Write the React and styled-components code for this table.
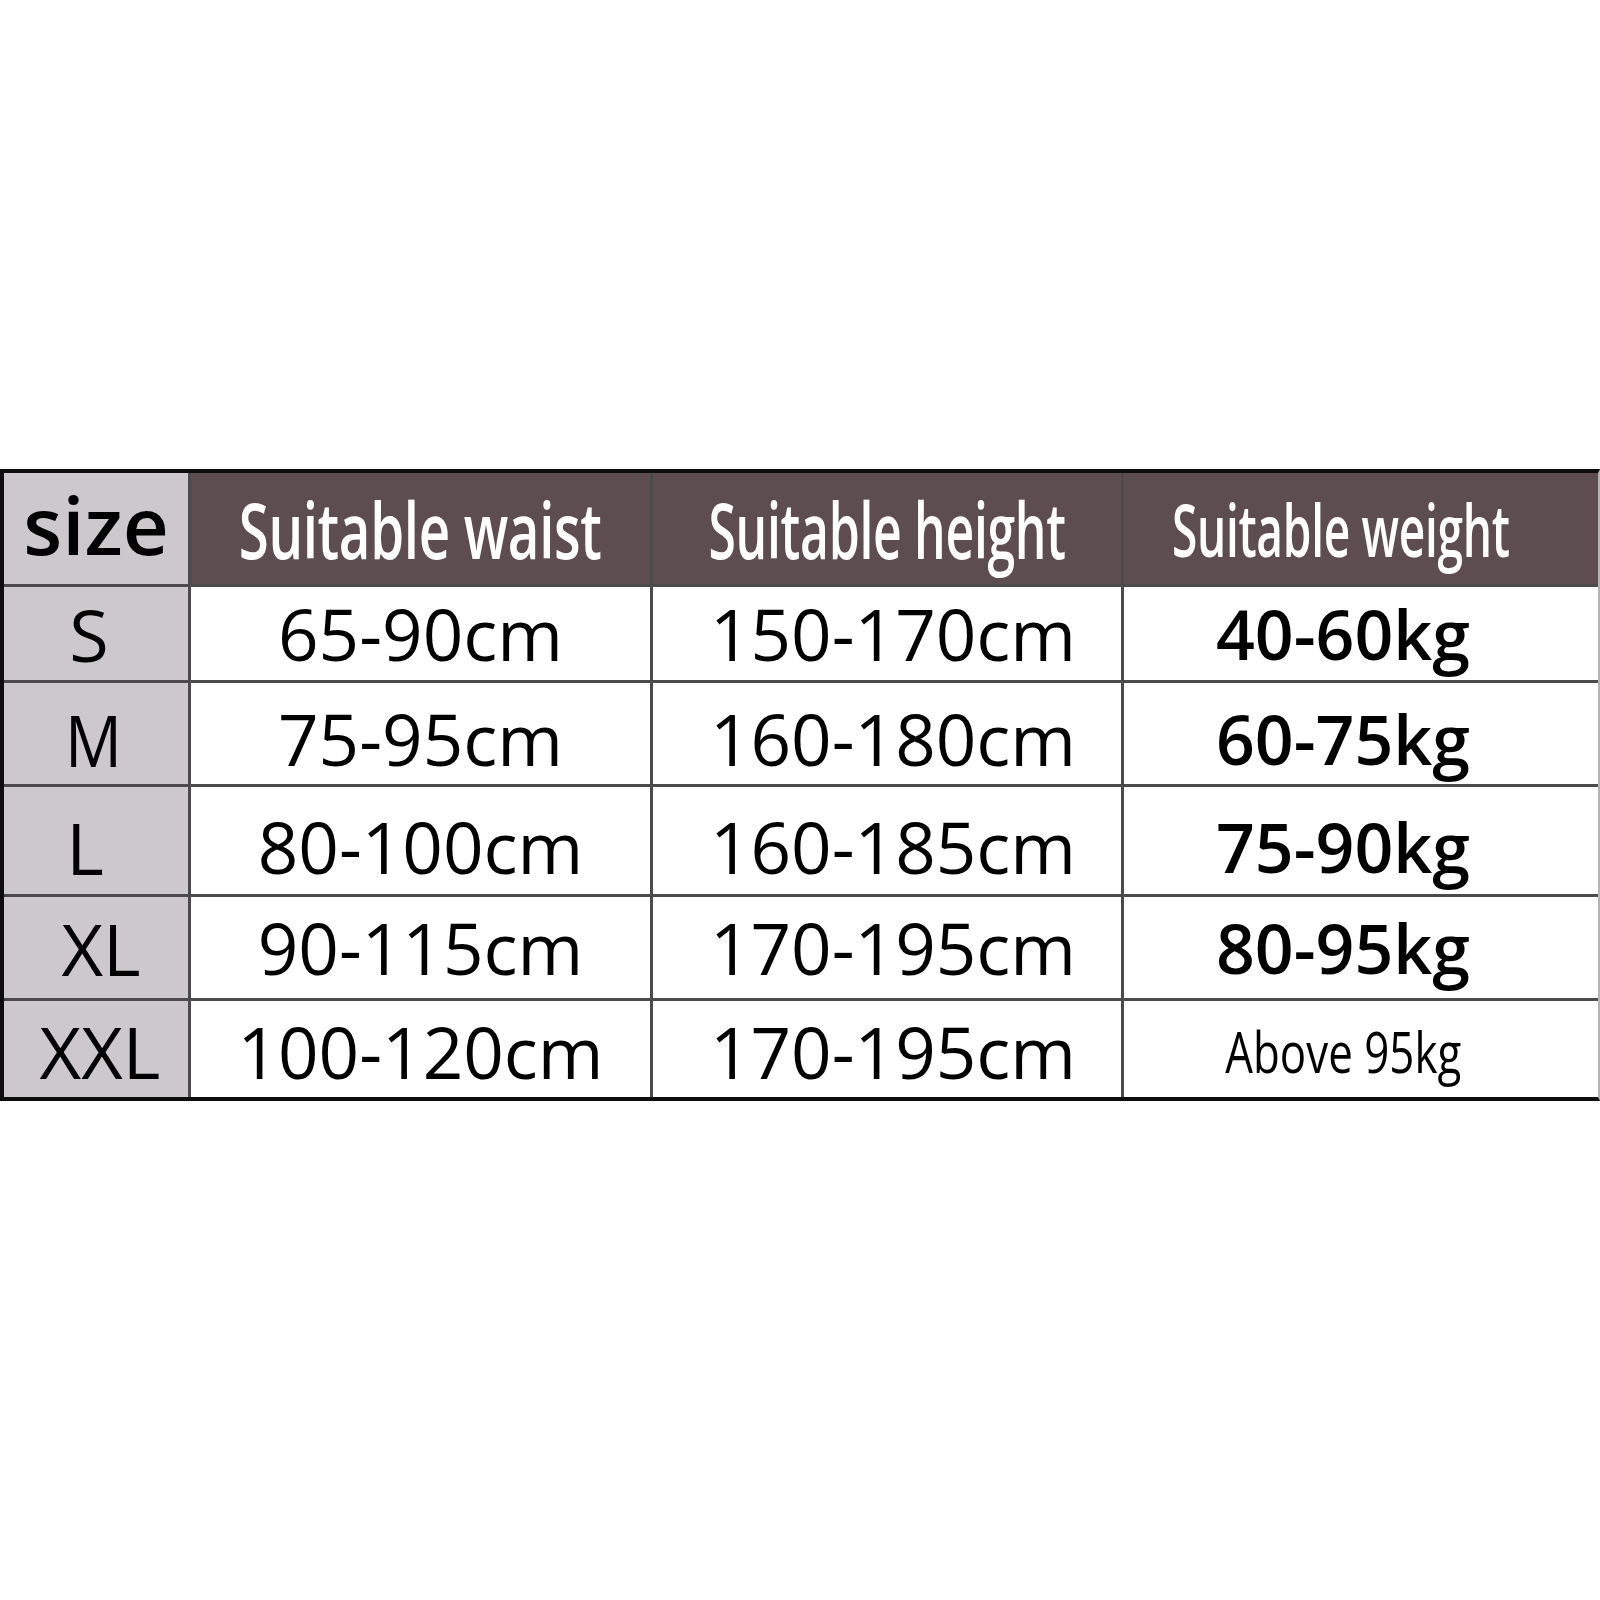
import React from "react";
import styled, { createGlobalStyle } from "styled-components";

const Global = createGlobalStyle`
  html, body { margin: 0; padding: 0; background: #ffffff; }
  body { font-family: "Open Sans", "Noto Sans", sans-serif; color: #000; }
`;

const Page = styled.div`
  width: 1600px;
  height: 1600px;
  padding-top: 469px;
  box-sizing: border-box;
  background: #fff;
`;

const Table = styled.div`
  display: grid;
  grid-template-columns: 184px 459px 468px 474px;
  grid-template-rows: 111px 93px 101px 107px 101px 96px;
  gap: 3px;
  background: #4b4b4b;
  border-top: 4px solid #0d0d0d;
  border-bottom: 4px solid #0d0d0d;
  border-left: 4px solid #0d0d0d;
  border-right: 2px solid #b5b5b5;
  width: 1600px;
  box-sizing: border-box;
`;

const Cell = styled.div`
  display: flex;
  align-items: center;
  justify-content: center;
  min-width: 0;
  background: ${(p) =>
    p.$kind === "head" ? "#5e4d50" : p.$kind === "size" ? "#ccc8cc" : "#ffffff"};
  padding-right: ${(p) => p.$padRight || 0}px;
  padding-left: ${(p) => p.$padLeft || 0}px;
  padding-top: ${(p) => p.$padTop || 0}px;
  box-sizing: border-box;
`;

const HeadText = styled.span`
  display: inline-block;
  white-space: nowrap;
  font-family: "Open Sans", sans-serif;
  font-weight: 600;
  font-size: ${(p) => p.$size}px;
  line-height: normal;
  color: #ffffff;
  transform: scaleX(${(p) => p.$scale});
  letter-spacing: -0.5px;
`;

const SizeHead = styled.span`
  font-family: "Open Sans", sans-serif;
  font-weight: 600;
  font-size: 80px;
  line-height: normal;
  color: #000;
  margin-top: -10px;
`;

const SizeText = styled.span`
  display: inline-block;
  font-family: "Open Sans", sans-serif;
  font-weight: 400;
  font-size: 72px;
  line-height: normal;
  color: #000;
  margin-left: ${(p) => p.$shift || 0}px;
  transform: scaleX(${(p) => p.$scale || 1});
`;

const DataText = styled.span`
  white-space: nowrap;
  font-family: "Open Sans", sans-serif;
  font-weight: ${(p) => (p.$bold ? 600 : 400)};
  font-size: ${(p) => (p.$bold ? 68 : 71)}px;
  line-height: normal;
  color: #000;
`;

const NarrowText = styled.span`
  display: inline-block;
  white-space: nowrap;
  font-family: "Open Sans", sans-serif;
  font-weight: 400;
  font-size: 57px;
  line-height: normal;
  color: #000;
  transform: scaleX(0.77);
`;

const rows = [
  { size: "S", shift: -14, scale: 1, waist: "65-90cm", height: "150-170cm", weight: "40-60kg", pad: 0 },
  { size: "M", shift: -6, scale: 0.88, waist: "75-95cm", height: "160-180cm", weight: "60-75kg", pad: 10 },
  { size: "L", shift: -22, scale: 1, waist: "80-100cm", height: "160-185cm", weight: "75-90kg", pad: 12 },
  { size: "XL", shift: 10, scale: 1, waist: "90-115cm", height: "170-195cm", weight: "80-95kg", pad: 0 },
  { size: "XXL", shift: 8, scale: 1, waist: "100-120cm", height: "170-195cm", weight: null, pad: 4 },
];

export default function App() {
  return (
    <>
      <Global />
      <Page>
        <Table>
          <Cell $kind="size">
            <SizeHead>size</SizeHead>
          </Cell>
          <Cell $kind="head">
            <HeadText $size={78} $scale={0.7}>Suitable waist</HeadText>
          </Cell>
          <Cell $kind="head">
            <HeadText $size={78} $scale={0.64}>Suitable height</HeadText>
          </Cell>
          <Cell $kind="head" $padRight={40}>
            <HeadText $size={72} $scale={0.64}>Suitable weight</HeadText>
          </Cell>
          {rows.map((r) => (
            <React.Fragment key={r.size}>
              <Cell $kind="size" $padTop={r.pad}>
                <SizeText $shift={r.shift} $scale={r.scale}>{r.size}</SizeText>
              </Cell>
              <Cell $padTop={r.pad}>
                <DataText>{r.waist}</DataText>
              </Cell>
              <Cell $padTop={r.pad} $padLeft={12}>
                <DataText>{r.height}</DataText>
              </Cell>
              <Cell $padRight={36} $padTop={r.pad}>
                {r.weight ? (
                  <DataText $bold>{r.weight}</DataText>
                ) : (
                  <NarrowText>Above 95kg</NarrowText>
                )}
              </Cell>
            </React.Fragment>
          ))}
        </Table>
      </Page>
    </>
  );
}
